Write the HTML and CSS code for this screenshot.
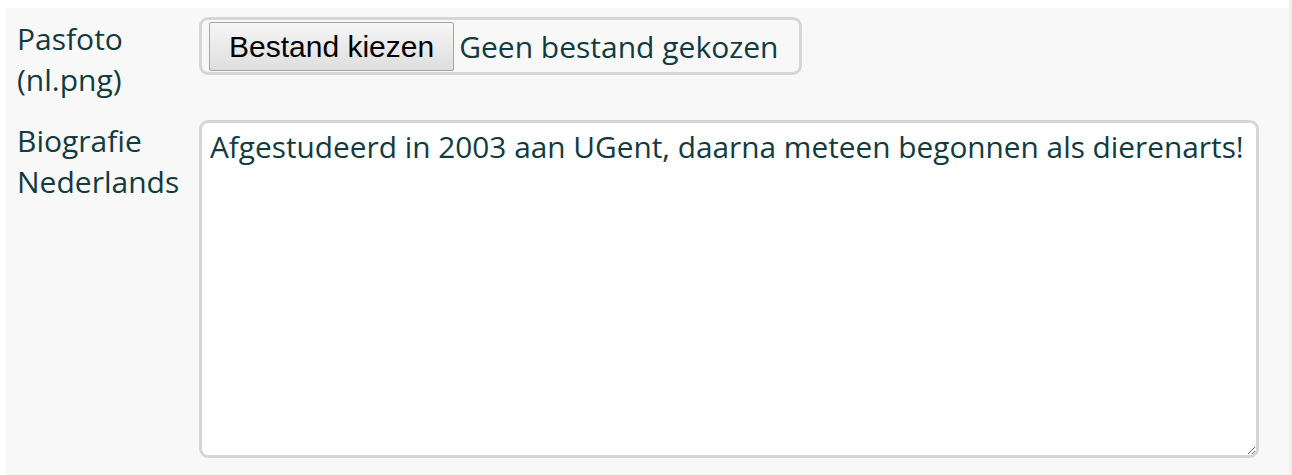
FILE: index.html
```html
<!DOCTYPE html>
<html lang="nl">
<head>
<meta charset="utf-8">
<title>Profiel</title>
<link rel="stylesheet" href="styles.css">
</head>
<body>
<div class="page">
  <form class="panel">
    <div class="row row-photo">
      <label class="label" for="foto">Pasfoto<br>(nl.png)</label>
      <div class="file">
        <button type="button" class="file-btn" id="foto">Bestand kiezen</button>
        <span class="file-name">Geen bestand gekozen</span>
      </div>
    </div>
    <div class="row">
      <label class="label" for="bio">Biografie<br>Nederlands</label>
      <textarea class="bio" id="bio">Afgestudeerd in 2003 aan UGent, daarna meteen begonnen als dierenarts!</textarea>
    </div>
  </form>
</div>
</body>
</html>
```
FILE: styles.css
```css
html, body {
  margin: 0;
  padding: 0;
  background: #ffffff;
  height: 100%;
  overflow: hidden;
}

.page {
  height: 100%;
  padding: 8px 0 0 6px;
  box-sizing: border-box;
  border-right: 3px solid #efefef;
  display: flex;
}

.panel {
  flex: 1;
  background: #f8f8f8;
  padding: 10px 0 0 11px;
  font-family: "Open Sans", "Noto Sans", sans-serif;
  font-size: 30px;
  line-height: 41px;
  color: #113b3e;
}

.row {
  display: flex;
  align-items: flex-start;
}

.row-photo {
  margin-bottom: 19px;
  height: 83px;
}

.label {
  width: 182px;
  flex: none;
  padding-top: 0;
}

.file {
  display: flex;
  align-items: center;
  width: 603px;
  height: 58px;
  box-sizing: border-box;
  border: 3px solid #d6d6d6;
  border-radius: 9px;
  padding: 0 0 0 7px;
  margin-top: -1px;
}

.file-btn {
  font-family: "Liberation Sans", Arial, sans-serif;
  font-size: 30px;
  line-height: 34px;
  color: #000000;
  height: 49px;
  padding: 0 19px;
  border: 1px solid #a4a4a4;
  border-radius: 2px;
  background: linear-gradient(#f6f6f6, #dedede);
  margin-top: 1px;
}

.file-name {
  margin-left: 5px;
  color: #113b3e;
}

.bio {
  width: 1060px;
  height: 338px;
  box-sizing: border-box;
  border: 3px solid #d6d6d6;
  border-radius: 9px;
  background: #ffffff;
  padding: 3px 0 3px 8px;
  margin: 0;
  font-family: "Open Sans", "Noto Sans", sans-serif;
  font-size: 29.8px;
  line-height: 41px;
  color: #113b3e;
  resize: vertical;
  outline: none;
  overflow: hidden;
}
```
